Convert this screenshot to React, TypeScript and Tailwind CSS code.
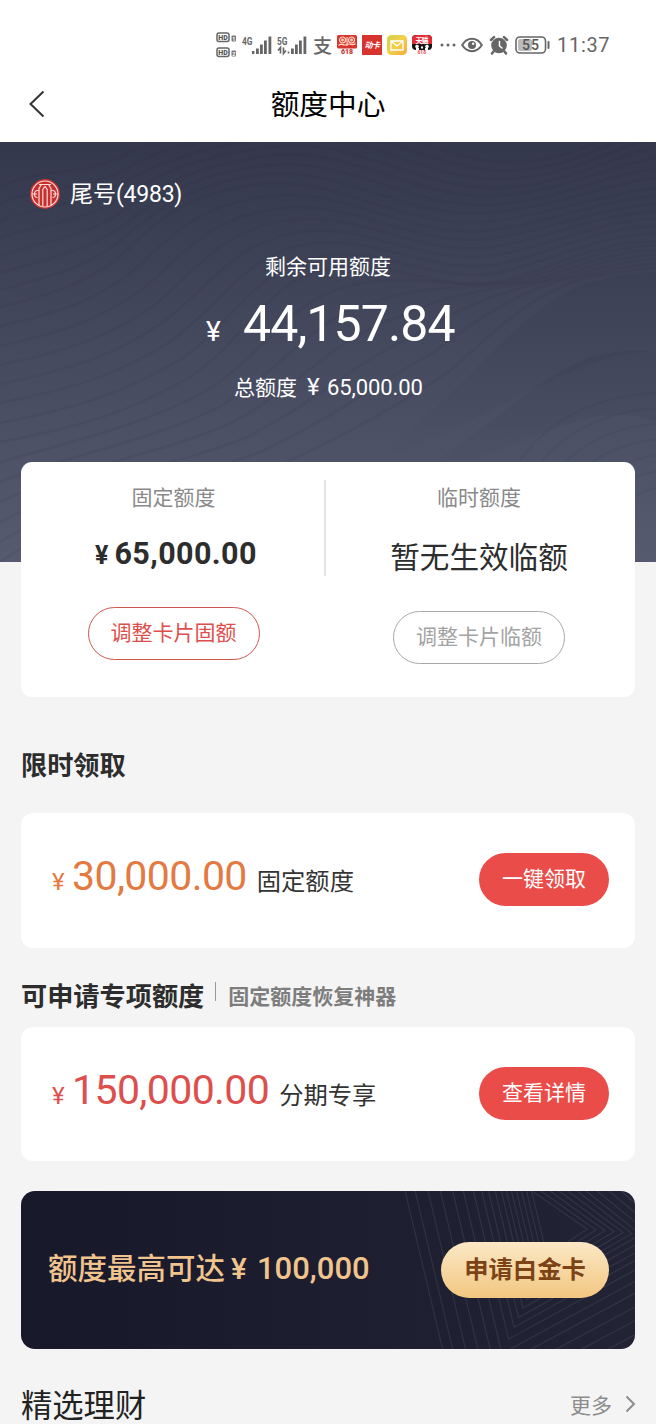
import { ReactNode } from 'react'
import clsx from 'clsx'

const num = "font-['Roboto','Noto_Sans_CJK_SC',sans-serif]"

// [x, y] anchors of the main contour lines, the rest is interpolated between them
const contours = [
  [0, 45, 40, 25, 80, 35, 120, 15, 160, -5, 230, -20, 300, -25, 370, -30, 440, 20, 510, 20, 580, 20, 620, -15, 670, -30],
  [0, 165, 60, 150, 90, 140, 125, 110, 160, 75, 190, 50, 260, 42, 340, 35, 400, 85, 480, 80, 550, 75, 600, 50, 670, 45],
  [0, 300, 80, 285, 130, 270, 190, 235, 250, 195, 270, 130, 340, 125, 400, 120, 440, 150, 500, 140, 560, 125, 600, 95, 670, 100],
  [0, 440, 90, 370, 200, 370, 290, 340, 380, 300, 420, 285, 470, 245, 520, 190, 560, 145, 600, 135, 630, 130, 650, 130, 670, 130],
]

function toPath(p: number[]) {
  let d = `M${p[0]},${p[1]}`
  for (let i = 2; i < p.length; i += 6) d += ` C${p.slice(i, i + 6).join(',')}`
  return d
}

function Waves() {
  const lines: string[] = []
  for (let k = 0; k < contours.length - 1; k++) {
    for (let s = 0; s < 7; s++) {
      const t = s / 7
      lines.push(toPath(contours[k].map((v, i) => Math.round(v + (contours[k + 1][i] - v) * t))))
    }
  }
  return (
    <svg className="absolute inset-0" width="656" height="420" viewBox="0 0 656 420" fill="none">
      <defs>
        <linearGradient id="ridge" x1="0" y1="0" x2="0" y2="1">
          <stop offset="0" stopColor="#2f3347" stopOpacity=".2" />
          <stop offset="1" stopColor="#2f3347" stopOpacity="0" />
        </linearGradient>
      </defs>
      <g stroke="#272b3f" strokeOpacity=".09" strokeWidth="2.500">
        {lines.map((d, i) => <path key={i} d={d} />)}
      </g>
      <path d="M330 335C450 290 510 155 600 138Q630 130 656 130V210C580 205 480 290 330 335Z" fill="url(#ridge)" />
      <path d="M380 350C470 310 550 215 610 211Q640 206 656 210V280C590 250 500 320 380 350Z" fill="url(#ridge)" />
      <g stroke="#2f3347" strokeOpacity=".09" strokeWidth="2">
        {[0, 1, 2, 3, 4, 5, 6].map(i => (
          <ellipse key={i} cx={640 + i * 3} cy={345 + i * 7} rx={134 - i * 13} ry={92 - i * 9} transform="rotate(-12 640 345)" />
        ))}
      </g>
    </svg>
  )
}

function Signal({ label, arrows }: { label: string; arrows?: boolean }) {
  return (
    <svg width="30" height="22" viewBox="0 0 30 22" fill="#666">
      <text x="0" y="10.5" fontSize="11.500" fontWeight="700" fontFamily="Roboto, sans-serif" textLength="10.5" lengthAdjust="spacingAndGlyphs">{label}</text>
      {arrows
        ? <path d="M3.500 19.500v-6l-2.500 3M6.500 13.500v6l2.500-3M11.500 17.500v2" fill="none" stroke="#666" strokeWidth="1.600" />
        : <rect x="10" y="17" width="2.400" height="3" />}
      <rect x="14" y="14.500" width="2.800" height="5.500" />
      <rect x="18" y="10.500" width="2.800" height="9.500" />
      <rect x="22" y="6.500" width="2.800" height="13.500" />
      <rect x="26.500" y="2.500" width="2.800" height="17.500" />
    </svg>
  )
}

function StatusBar() {
  return (
    <div className="flex h-[66px] items-center pt-[23px] pl-[216px] text-[#666]">
      <svg width="22" height="26" viewBox="0 0 22 26" className="mr-1">
        {[0, 1].map(i => (
          <g key={i} transform={`translate(0 ${i * 15})`}>
            <rect x="1" y="1" width="12" height="8.500" rx="2" fill="none" stroke="#666" strokeWidth="1.500" />
            <text x="2.300" y="8.200" fontSize="8" fontWeight="900" fill="#555" fontFamily="Roboto, sans-serif" textLength="9.400" lengthAdjust="spacingAndGlyphs">HD</text>
            <rect x="15.500" y="3.500" width="4.500" height="6" rx="1" fill="#777" />
            <text x="16.200" y="8.600" fontSize="5.500" fontWeight="700" fill="#fff" fontFamily="Roboto, sans-serif">{i + 1}</text>
          </g>
        ))}
      </svg>
      <Signal label="4G" />
      <span className="w-[5px]" />
      <Signal label="5G" arrows />
      <span className="ml-[6px] w-[20px] text-[19px] leading-[22px] font-medium">支</span>
      <svg width="20" height="20" viewBox="0 0 20 20" className="ml-[4px]">
        <rect width="20" height="13.500" rx="1.500" fill="#d8352f" />
        <g fill="none" stroke="#ffd9c4" strokeWidth="1.200">
          <circle cx="5.500" cy="5" r="3" />
          <circle cx="14.500" cy="5" r="3" />
          <circle cx="5.500" cy="5" r=".8" />
          <circle cx="14.500" cy="5" r=".8" />
          <path d="M1.500 10.500c3-3 5 1 8.500-1s5.500 2 8.500-1M10 2v9" />
        </g>
        <text x="4" y="19.200" fontSize="7" fontWeight="900" fill="#c8332c" fontFamily="Roboto, sans-serif" textLength="12">618</text>
      </svg>
      <span className="ml-[5px] flex h-5 w-5 items-center justify-center bg-[#d7342f] text-[8px] leading-none font-bold tracking-[-0.5px] text-white italic">动卡</span>
      <svg width="20" height="20" viewBox="0 0 20 20" className="ml-[5px]">
        <defs>
          <linearGradient id="mail" x1="0" y1="0" x2="1" y2="1">
            <stop stopColor="#d2d34a" />
            <stop offset=".5" stopColor="#f2cf4b" />
            <stop offset="1" stopColor="#f5a83b" />
          </linearGradient>
        </defs>
        <rect width="20" height="20" rx="4.500" fill="url(#mail)" />
        <path d="M4 6h12v9H4zM4.500 6.500l5.500 4.500 5.500-4.500" fill="none" stroke="#fff" strokeWidth="1.300" />
      </svg>
      <svg width="20" height="20" viewBox="0 0 20 20" className="ml-[5px]">
        <rect width="20" height="15" rx="4" fill="#171214" />
        <path d="M4 0h12a4 4 0 0 1 4 4v5H0V4a4 4 0 0 1 4-4z" fill="#e22c38" />
        <text x="3.500" y="7.500" fontSize="7" fontWeight="700" fill="#fff" fontFamily="Noto Sans CJK SC, sans-serif" textLength="13">天猫</text>
        <circle cx="5" cy="11.500" r="1.800" fill="#fff" />
        <circle cx="15" cy="11.500" r="1.800" fill="#fff" />
        <path d="M4 15v-2h3v2zM9 11.500h2v2h-2zM13 15v-2h3v2z" fill="#fff" />
        <text x="5.500" y="19.400" fontSize="5" fontWeight="700" fill="#dc4a50" fontFamily="Roboto, sans-serif">618</text>
      </svg>
      <svg width="16" height="4" viewBox="0 0 16 4" className="ml-[8px]" fill="#666">
        <circle cx="2" cy="2" r="1.500" />
        <circle cx="8" cy="2" r="1.500" />
        <circle cx="14" cy="2" r="1.500" />
      </svg>
      <svg width="22" height="16" viewBox="0 0 22 16" className="ml-[5px]" fill="none">
        <path d="M1.200 8C6-.2 16-.2 20.800 8 16 16.200 6 16.200 1.200 8z" stroke="#666" strokeWidth="2" />
        <circle cx="11" cy="8" r="4" fill="#666" />
        <circle cx="12.200" cy="6.800" r="1.200" fill="#fff" />
      </svg>
      <svg width="20" height="20" viewBox="0 0 20 20" className="ml-[6px]" fill="none" stroke="#666" strokeLinecap="round">
        <circle cx="10" cy="10.500" r="7.800" fill="#666" stroke="none" />
        <path d="M2 5L5 2.200M18 5L15 2.200M4.500 16.500L3 18.500M15.500 16.500L17 18.500" strokeWidth="2.500" />
        <path d="M10.500 6.500v4.500l2.500 2" stroke="#fff" strokeWidth="1.500" />
      </svg>
      <svg width="36" height="18" viewBox="0 0 36 18" className="ml-[6px]">
        <rect x="1" y="1" width="29.500" height="16" rx="4" fill="none" stroke="#666" strokeWidth="1.600" />
        <rect x="3" y="3" width="14" height="12" rx="2" fill="#bbb" />
        <rect x="32.500" y="5" width="2" height="8" rx="1" fill="#666" />
        <text x="7" y="14" fontSize="14" fontWeight="500" fill="#555" fontFamily="Roboto, sans-serif" textLength="17">55</text>
      </svg>
      <span className={clsx(num, 'ml-[6px] text-[20px] leading-none tracking-[0.7px]')}>11:37</span>
    </div>
  )
}

function BankLogo() {
  return (
    <svg width="30" height="30" viewBox="0 0 30 30" fill="none">
      <circle cx="15" cy="15" r="15" fill="#c92f2e" />
      <g stroke="#fbdcd9" strokeWidth="1.200">
        <circle cx="15" cy="15" r="13" />
        <path d="M9 5.500h12M9 26V9.500L11.500 5.500M12.800 27.500V10.500L15 7.500l2.200 3v17M21 26V9.500L18.500 5.500" />
        <path d="M9 11.500H7.500C5.500 11.500 4.500 13 4.500 15s1 3.500 3 3.500M21 11.500h1.500c2 0 3 1.500 3 3.500s-1 3.500-3 3.500M2 15h5M28 15h-5" />
      </g>
    </svg>
  )
}

function Hero() {
  return (
    <section className="relative h-[420px] bg-linear-to-b from-[#34384c] via-[#454a5f] to-[#565b70] text-white">
      <Waves />
      <div className="relative flex flex-col">
        <div className="mt-[37px] flex h-[30px] items-center gap-[10px] pl-[30px]">
          <BankLogo />
          <span className="pb-[2px] text-[23px] leading-[30px]">尾号<span className={clsx(num, 'tracking-[-0.25px]')}>(4983)</span></span>
        </div>
        <div className="mt-[41px] h-[30px] text-center text-[21px] leading-[30px]">剩余可用额度</div>
        <div className={clsx(num, 'mt-[14px] flex h-[60px] items-baseline pl-[206px] leading-[60px]')}>
          <span className="w-[37px] text-[28px]">¥</span>
          <span className="text-[50px] tracking-[-0.9px]">44,157.84</span>
        </div>
        <div className="mt-[17px] flex h-[30px] items-baseline pl-[234px] text-[21px] leading-[30px]">
          <span className="w-[73px]">总额度</span>
          <span className={clsx(num, 'w-[20px] text-[24px]')}>¥</span>
          <span className={clsx(num, 'text-[22px] tracking-[-0.1px]')}>65,000.00</span>
        </div>
      </div>
    </section>
  )
}

function LimitCard() {
  return (
    <section className="relative mx-[21px] -mt-[100px] flex h-[235px] rounded-[11px] bg-white">
      <div className="flex w-[303px] flex-col items-center pt-[19px] pl-[2px]">
        <div className="text-[21px] leading-[30px] text-[#8a8a8a]">固定额度</div>
        <div className={clsx(num, 'mt-[23px] flex h-[40px] items-baseline gap-[6px] pl-[5px] leading-[40px] font-bold text-[#2d2d2d]')}>
          <span className="text-[25px]">¥</span>
          <span className="text-[30.500px] tracking-[0.4px]">65,000.00</span>
        </div>
        <button className="mt-[33px] h-[53px] w-[172px] rounded-full border-[1.500px] border-[#d2554f] pb-[5px] text-[21px] leading-none text-[#dd4f4c]">调整卡片固额</button>
      </div>
      <div className="mt-[18px] h-[96px] w-[2px] bg-[#e4e4e4]" />
      <div className="flex flex-1 flex-col items-center pt-[19px] pr-[3px]">
        <div className="text-[21px] leading-[30px] text-[#8a8a8a]">临时额度</div>
        <div className="mt-[25px] h-[40px] text-[29.600px] leading-[40px] text-[#2d2d2d]">暂无生效临额</div>
        <button className="mt-[35px] h-[53px] w-[172px] rounded-full border-[1.500px] border-[#a9a9a9] pb-[5px] text-[21px] leading-none text-[#a3a3a3]">调整卡片临额</button>
      </div>
    </section>
  )
}

function OfferCard({ amount, label, action, tone, className }: {
  amount: string; label: string; action: string; tone: string; className?: string
}) {
  return (
    <section className={clsx('mx-[21px] flex items-start rounded-[12px] bg-white pr-[26px] pl-[31px]', className)}>
      <div className="mt-[36px] flex h-[54px] flex-1 items-baseline leading-[54px]">
        <span className={clsx(num, tone, 'w-[20px] text-[24px]')}>¥</span>
        <span className={clsx(num, tone, 'text-[41px] tracking-[-0.6px]')}>{amount}</span>
        <span className="ml-[10px] text-[24.300px] text-[#333]">{label}</span>
      </div>
      <button className="mt-[40px] h-[53px] w-[130px] rounded-full bg-[#ea4d49] pb-[4px] text-[21px] leading-none text-white">{action}</button>
    </section>
  )
}

function Heading({ children, className }: { children: ReactNode; className?: string }) {
  return <h2 className={clsx('flex h-[40px] items-center pl-[21px] text-[26.200px] leading-[40px] font-bold text-[#2d2d2d]', className)}>{children}</h2>
}

const ringSteps = [0, 0.9, 1.8, 2.7, 3.6, 4.5, 5.4, 6.5, 7.7, 8.9, 10.4, 12.2, 14.1, 16.3, 18.5, 20.8, 22.6]

function Banner() {
  const rings = ringSteps.map(i => {
    const vx = 526 - 3.7 * i
    const vy = 65 + 8 * i
    const tx = 566 + 10 * i
    const ty = 38 + i
    return `${vx - 0.237 * vy},0 ${vx},${vy} ${tx},${ty} ${tx - 55},0`
  })
  return (
    <section className="relative mx-[21px] mt-[30px] flex h-[158px] items-center justify-between overflow-hidden rounded-[14px] bg-linear-to-r from-[#17182a] to-[#222334] pr-[26px] pl-[27px]">
      <svg className="absolute inset-0" width="614" height="158" viewBox="0 0 614 158" fill="none" stroke="#8b8d9f" strokeOpacity=".17" strokeWidth="1.200">
        {rings.map(points => <polyline key={points} points={points} />)}
      </svg>
      <div className="relative flex items-baseline pb-[5px] text-[29.500px] leading-[40px] font-medium text-[#f0c48c]">
        <span className="w-[183px]">额度最高可达</span>
        <span className={clsx(num, 'w-[26px]')}>¥</span>
        <span className={clsx(num, 'text-[31px]')}>100,000</span>
      </div>
      <button className="relative h-[56px] w-[168px] rounded-full bg-linear-to-b from-[#fbe8c6] to-[#f2c67f] pb-[4px] text-[24.300px] leading-none font-bold text-[#7b4316]">申请白金卡</button>
    </section>
  )
}

export default function App() {
  return (
    <main className="h-[1424px] w-[656px] overflow-hidden bg-[#f4f4f4] font-['Noto_Sans_CJK_SC',sans-serif]">
      <header className="h-[142px] bg-white">
        <StatusBar />
        <div className="flex h-[76px] items-center">
          <svg width="16" height="28" viewBox="0 0 16 28" className="ml-[29px]" fill="none" stroke="#333" strokeWidth="2">
            <path d="M14.500 1.500L1.500 14l13 12.500" />
          </svg>
          <h1 className="flex-1 pr-[45px] pb-[2px] text-center text-[28.700px] leading-none font-normal text-black">额度中心</h1>
        </div>
      </header>
      <Hero />
      <LimitCard />
      <Heading className="mt-[47px]">限时领取</Heading>
      <OfferCard className="mt-[29px] h-[135px]" amount="30,000.00" label="固定额度" action="一键领取" tone="text-[#e37a42]" />
      <Heading className="mt-[27px]">
        可申请专项额度
        <span className="mb-[7px] ml-[11px] h-[19px] w-px bg-[#999]" />
        <span className="ml-[12px] pb-px text-[21px] font-bold text-[#7d7d7d]">固定额度恢复神器</span>
      </Heading>
      <OfferCard className="mt-[12px] h-[134px]" amount="150,000.00" label="分期专享" action="查看详情" tone="text-[#dd4f4c]" />
      <Banner />
      <div className="mt-[38px] flex h-[34px] items-center justify-between pr-[20px] pl-[21px]">
        <h2 className="text-[31.300px] leading-[32px] text-[#222]">精选理财</h2>
        <div className="flex items-center gap-[13px] text-[21px] leading-[30px] text-[#8c8c8c]">
          <span className="pb-[1px]">更多</span>
          <svg width="11" height="18" viewBox="0 0 11 18" fill="none" stroke="#8c8c8c" strokeWidth="2">
            <path d="M1.500 1.500L9 9l-7.500 7.500" />
          </svg>
        </div>
      </div>
    </main>
  )
}
